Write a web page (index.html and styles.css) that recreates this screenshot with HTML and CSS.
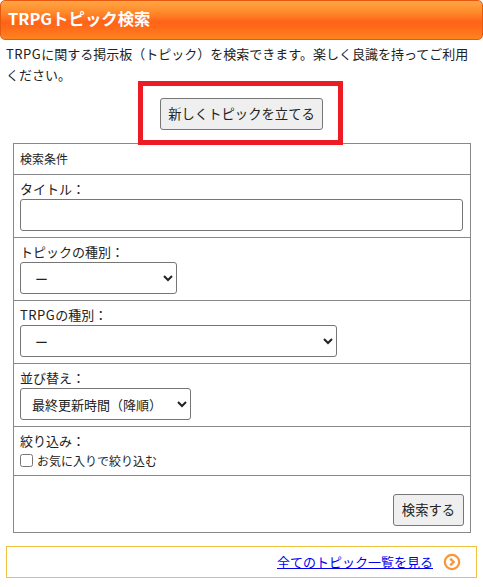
FILE: index.html
```html
<!DOCTYPE html>
<html lang="ja">
<head>
<meta charset="utf-8">
<title>TRPGトピック検索</title>
<link rel="stylesheet" href="styles.css">
</head>
<body>
<h1 class="title">TRPGトピック検索</h1>
<p class="intro"><span class="latin">TRPG</span>に関する掲示板（トピック）を検索できます。楽しく良識を持ってご利用ください。</p>
<div class="new-wrap">
  <button class="btn btn-new" type="button">新しくトピックを立てる</button>
  <div class="marker"></div>
</div>
<form class="search">
  <div class="row row-head">検索条件</div>
  <div class="row">
    <label class="lbl" for="t">タイトル：</label>
    <input class="text" id="t" type="text">
  </div>
  <div class="row">
    <label class="lbl" for="k">トピックの種別：</label>
    <select class="sel sel-kind" id="k"><option>&nbsp;ー</option></select>
  </div>
  <div class="row">
    <label class="lbl" for="g"><span class="latin">TRPG</span>の種別：</label>
    <select class="sel sel-game" id="g"><option>&nbsp;ー</option></select>
  </div>
  <div class="row">
    <label class="lbl" for="s">並び替え：</label>
    <select class="sel sel-sort" id="s"><option>最終更新時間（降順）</option></select>
  </div>
  <div class="row row-filter">
    <div class="lbl">絞り込み：</div>
    <label class="check"><input class="box" type="checkbox">お気に入りで絞り込む</label>
  </div>
  <div class="row row-submit"><button class="btn btn-submit" type="button">検索する</button></div>
</form>
<div class="more">
  <a href="#" class="more-link">全てのトピック一覧を見る</a>
  <svg class="more-icon" width="18" height="18" viewBox="0 0 18 18" aria-hidden="true"><circle cx="9" cy="9" r="7.2" fill="#fff" stroke="#f9963a" stroke-width="2.2"/><path d="M7.3 5.6 10.6 9 7.3 12.4" fill="none" stroke="#f9963a" stroke-width="2.4"/></svg>
</div>
</body>
</html>
```

FILE: styles.css
```css
* { box-sizing: border-box; }
html, body { margin: 0; padding: 0; }
body {
  width: 483px;
  height: 587px;
  overflow: hidden;
  background: #fff;
  color: #222;
  font-family: "Noto Sans CJK JP", "Open Sans", sans-serif;
  font-size: 13px;
  line-height: 20px;
}
.latin { letter-spacing: 0.5px; }
.title {
  margin: 0;
  height: 40px;
  padding: 0 7px;
  border: 1px solid #e8590f;
  border-radius: 5px;
  background: linear-gradient(#ffa544 0, #ff8a2a 30%, #ff6318 55%, #ff6a1a 70%, #ff8420 100%);
  color: #fff;
  font-size: 16.4px;
  font-weight: 700;
  line-height: 35px;
}
.intro {
  margin: 3px 0 0;
  padding: 0 6px;
  height: 41px;
  line-height: 21px;
}
.new-wrap {
  position: relative;
  display: flex;
  justify-content: center;
  padding-top: 14px;
  height: 59px;
}
.btn {
  height: 32px;
  padding: 0;
  border: 1px solid #767676;
  border-radius: 3px;
  background: #efefef;
  color: #222;
  font: inherit;
  font-size: 13.33px;
}
.btn-new { width: 163px; }
.btn-submit { width: 71px; }
.marker {
  position: absolute;
  left: 138px;
  top: -3px;
  width: 205px;
  height: 64px;
  border: 5px solid #ed1c24;
  pointer-events: none;
}
.search {
  display: block;
  margin: 0 12px 0 13px;
  border: 1px solid #888;
}
.row {
  height: 63px;
  padding: 0 6px;
  border-top: 1px solid #888;
}
.row-head {
  height: 30px;
  border-top: 0;
  font-size: 12px;
  line-height: 29px;
}
.lbl {
  display: block;
  height: 24px;
  padding-top: 4px;
  line-height: 20px;
}
.text {
  display: block;
  width: 443px;
  height: 32px;
  border: 1px solid #767676;
  border-radius: 3px;
  background: #fff;
}
.sel {
  display: block;
  height: 32px;
  padding: 0 0 0 7px;
  border: 1px solid #767676;
  border-radius: 3px;
  background: #fff;
  color: #222;
  font: inherit;
}
.sel-kind { width: 157px; }
.sel-game { width: 317px; }
.sel-sort { width: 171px; }
.row-filter { height: 49px; }
.check {
  display: flex;
  align-items: center;
  height: 19px;
  font-size: 12px;
}
.box {
  width: 13px;
  height: 13px;
  margin: 0 4px 0 0;
}
.row-submit {
  height: 57px;
  display: flex;
  justify-content: flex-end;
  align-items: flex-end;
  padding: 0 6px 6px 0;
}
.more {
  display: flex;
  justify-content: flex-end;
  align-items: center;
  gap: 10px;
  height: 32px;
  margin: 13px 6px 0;
  padding-right: 15px;
  border: 1px solid #f0c040;
}
.more-link { color: #00e; }
.more-icon { display: block; }
```
